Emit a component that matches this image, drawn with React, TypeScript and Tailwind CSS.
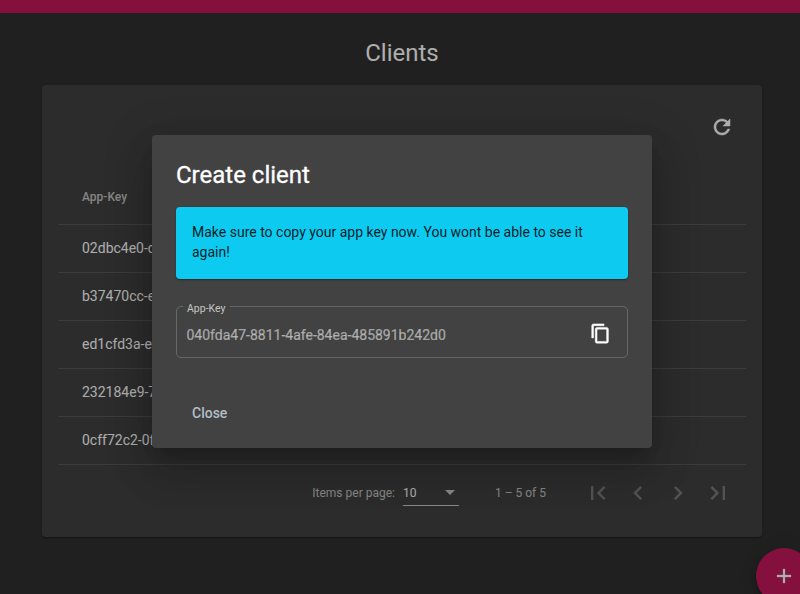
import React from "react";

const clients = ["02dbc4e0-d", "b37470cc-e", "ed1cfd3a-e", "232184e9-7", "0cff72c2-0f"];

function Icon({ d, size = 24, weight = 0 }: { d: string; size?: number; weight?: number }) {
  return (
    <svg width={size} height={size} viewBox="0 0 24 24" fill="currentColor" stroke="currentColor" strokeWidth={weight} className="block shrink-0">
      <path d={d} />
    </svg>
  );
}

const REFRESH =
  "M17.65 6.35C16.2 4.9 14.21 4 12 4c-4.42 0-7.99 3.58-7.99 8s3.57 8 7.99 8c3.73 0 6.84-2.55 7.73-6h-2.08c-.82 2.33-3.04 4-5.65 4-3.31 0-6-2.69-6-6s2.69-6 6-6c1.66 0 3.14.69 4.22 1.78L13 11h7V4l-2.35 2.35z";
const COPY =
  "M16 1H4c-1.1 0-2 .9-2 2v14h2V3h12V1zm3 4H8c-1.1 0-2 .9-2 2v14c0 1.1.9 2 2 2h11c1.1 0 2-.9 2-2V7c0-1.1-.9-2-2-2zm0 16H8V7h11v14z";
const ADD = "M19 13h-6v6h-2v-6H5v-2h6V5h2v6h6v2z";
const pagerIcons = [
  "M18.41 16.59L13.82 12l4.59-4.59L17 6l-6 6 6 6zM6 6h2v12H6z",
  "M15.41 7.41L14 6l-6 6 6 6 1.41-1.41L10.83 12z",
  "M10 6L8.59 7.41 13.17 12l-4.58 4.59L10 18l6-6z",
  "M5.59 7.41L10.18 12l-4.59 4.59L7 18l6-6-6-6zM16 6h2v12h-2z",
];

function Paginator() {
  return (
    <div className="flex h-14 items-center justify-end pr-2 text-xs text-white/70">
      <span className="mr-2">Items per page:</span>
      <div className="mr-9 flex h-[26px] w-14 items-center justify-between border-b border-white/70 text-white">
        <span>10</span>
        <span className="mr-1 border-x-[5px] border-t-[5px] border-x-transparent border-t-white/70" />
      </div>
      <span className="mr-8">1 – 5 of 5</span>
      <div className="flex text-white/30">
        {pagerIcons.map((d) => (
          <button key={d} className="flex size-10 items-center justify-center">
            <Icon d={d} size={28} />
          </button>
        ))}
      </div>
    </div>
  );
}

function ClientsPage() {
  return (
    <main className="flex flex-col">
      <header className="h-[13px] bg-[#c2185b]" />
      <h1 className="mt-6 ml-1 text-center text-2xl leading-8 text-white">Clients</h1>
      <section className="mt-4 ml-[42px] h-[452px] w-[720px] rounded bg-[#424242] px-4 shadow-[0_2px_1px_-1px_rgba(0,0,0,0.2),0_1px_1px_0_rgba(0,0,0,0.14),0_1px_3px_0_rgba(0,0,0,0.12)]">
        <div className="flex h-[84px] items-center justify-end pr-3 text-white">
          <button>
            <Icon d={REFRESH} weight={0.5} />
          </button>
        </div>
        <div className="flex h-14 items-center border-b border-white/12 px-6 text-xs font-medium text-white/70">App-Key</div>
        {clients.map((key) => (
          <div key={key} className="flex h-12 items-center border-b border-white/12 px-6 pb-0.5 text-sm text-white">
            {key}
          </div>
        ))}
        <Paginator />
      </section>
      <button className="absolute top-[548px] left-[756px] flex size-14 items-center justify-center rounded-full bg-[#c2185b] text-white shadow-[0_3px_5px_-1px_rgba(0,0,0,0.2),0_6px_10px_0_rgba(0,0,0,0.14),0_1px_18px_0_rgba(0,0,0,0.12)]">
        <Icon d={ADD} weight={0.25} />
      </button>
    </main>
  );
}

function CreateClientDialog() {
  return (
    <div className="absolute inset-0 bg-black/32 pt-[135px] pl-[152px]">
      <div
        role="dialog"
        className="h-[313px] w-[500px] rounded bg-[#424242] px-6 pt-6 text-white shadow-[0_11px_15px_-7px_rgba(0,0,0,0.2),0_24px_38px_3px_rgba(0,0,0,0.14),0_9px_46px_8px_rgba(0,0,0,0.12)]"
      >
        <h2 className="text-2xl leading-8 [-webkit-text-stroke:0.3px_white]">Create client</h2>
        <p className="mt-4 h-[72px] rounded bg-[#0dcaf0] px-4 pt-[15px] text-sm leading-5 text-black/87 shadow-[0_2px_1px_-1px_rgba(0,0,0,0.2),0_1px_1px_0_rgba(0,0,0,0.14),0_1px_3px_0_rgba(0,0,0,0.12)]">
          Make sure to copy your app key now. You wont be able to see it again!
        </p>
        <div className="relative mt-[27px] flex h-[52px] items-center justify-between rounded-[5px] border border-white/20 pr-4 pl-[9.5px]">
          <span className="absolute -top-1 left-[6px] bg-[#424242] pr-[5px] pl-1 text-[10.5px] leading-3 text-white/70">App-Key</span>
          <span className="pt-1.5 text-sm text-white/50 [-webkit-text-stroke:0.2px_rgba(255,255,255,0.5)]">040fda47-8811-4afe-84ea-485891b242d0</span>
          <button className="pt-0.5">
            <Icon d={COPY} size={21} weight={0.6} />
          </button>
        </div>
        <button className="mt-[37px] flex h-9 items-center px-4 text-sm font-medium text-[#b0bec5]">Close</button>
      </div>
    </div>
  );
}

export default function App() {
  return (
    <div className="relative h-[594px] w-[800px] overflow-hidden bg-[#303030] font-[Roboto,sans-serif]">
      <ClientsPage />
      <CreateClientDialog />
    </div>
  );
}
